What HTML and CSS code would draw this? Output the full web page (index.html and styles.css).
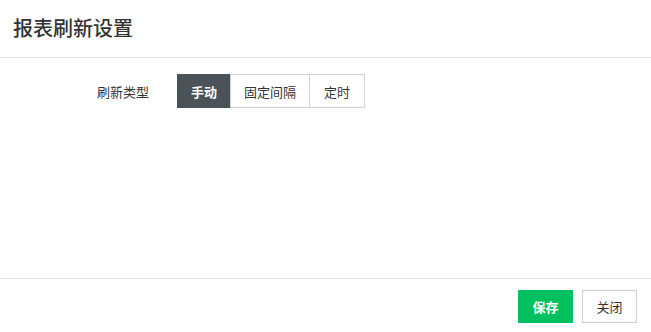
FILE: index.html
```html
<!DOCTYPE html>
<html lang="zh-CN">
<head>
    <meta charset="UTF-8">
    <meta name="viewport" content="width=device-width, initial-scale=1.0">
    <title>报表刷新设置</title>
    <link rel="stylesheet" href="styles.css">
</head>
<body>
    <div class="dialog">
        <div class="dialog-header">
            <h1 class="dialog-title">报表刷新设置</h1>
        </div>
        <div class="dialog-body">
            <div class="form-row">
                <label class="form-label">刷新类型</label>
                <div class="segment">
                    <button class="segment-item active">手动</button>
                    <button class="segment-item item-interval">固定间隔</button>
                    <button class="segment-item item-timer">定时</button>
                </div>
            </div>
        </div>
        <div class="dialog-footer">
            <button class="btn btn-primary">保存</button>
            <button class="btn btn-default">关闭</button>
        </div>
    </div>
</body>
</html>
```

FILE: styles.css
```css
/* Global Styles */
* {
    margin: 0;
    padding: 0;
    box-sizing: border-box;
}

body {
    font-family: "Noto Sans CJK SC", "Noto Sans", sans-serif;
    background-color: #fff;
    color: #333;
}

.dialog {
    width: 651px;
    height: 332px;
    display: flex;
    flex-direction: column;
}

.dialog-header {
    height: 58px;
    padding-left: 13px;
    border-bottom: 1px solid #e3e3e3;
    display: flex;
    align-items: center;
}

.dialog-title {
    font-size: 20px;
    font-weight: 500;
    color: #333;
    line-height: 1;
    margin-top: -2px;
}

.dialog-body {
    height: 221px;
    padding-top: 16px;
    border-bottom: 1px solid #e3e3e3;
}

.form-row {
    display: flex;
    align-items: center;
}

.form-label {
    width: 149px;
    margin-right: 28px;
    text-align: right;
    font-size: 13px;
    color: #333;
}

.segment {
    display: flex;
}

.segment-item {
    width: 54px;
    height: 34px;
    font-family: inherit;
    font-size: 13px;
    color: #333;
    background-color: #fff;
    border: 1px solid #d0d0d0;
    margin-left: -1px;
    cursor: pointer;
}

.segment-item:first-child {
    margin-left: 0;
}

.segment-item.active {
    background-color: #4a5358;
    border-color: #4a5358;
    color: #fff;
    font-weight: 700;
}

.item-interval {
    width: 80px;
}

.item-timer {
    width: 56px;
}

.dialog-footer {
    flex: 1;
    display: flex;
    justify-content: flex-end;
    align-items: flex-start;
    padding-top: 11px;
    padding-right: 14px;
    gap: 9px;
}

.btn {
    width: 55px;
    height: 33px;
    font-family: inherit;
    font-size: 13px;
    cursor: pointer;
}

.btn-primary {
    background-color: #00c060;
    border: 1px solid #00c060;
    color: #fff;
    font-weight: 700;
}

.btn-default {
    background-color: #fff;
    border: 1px solid #cfcfcf;
    color: #333;
}
```
